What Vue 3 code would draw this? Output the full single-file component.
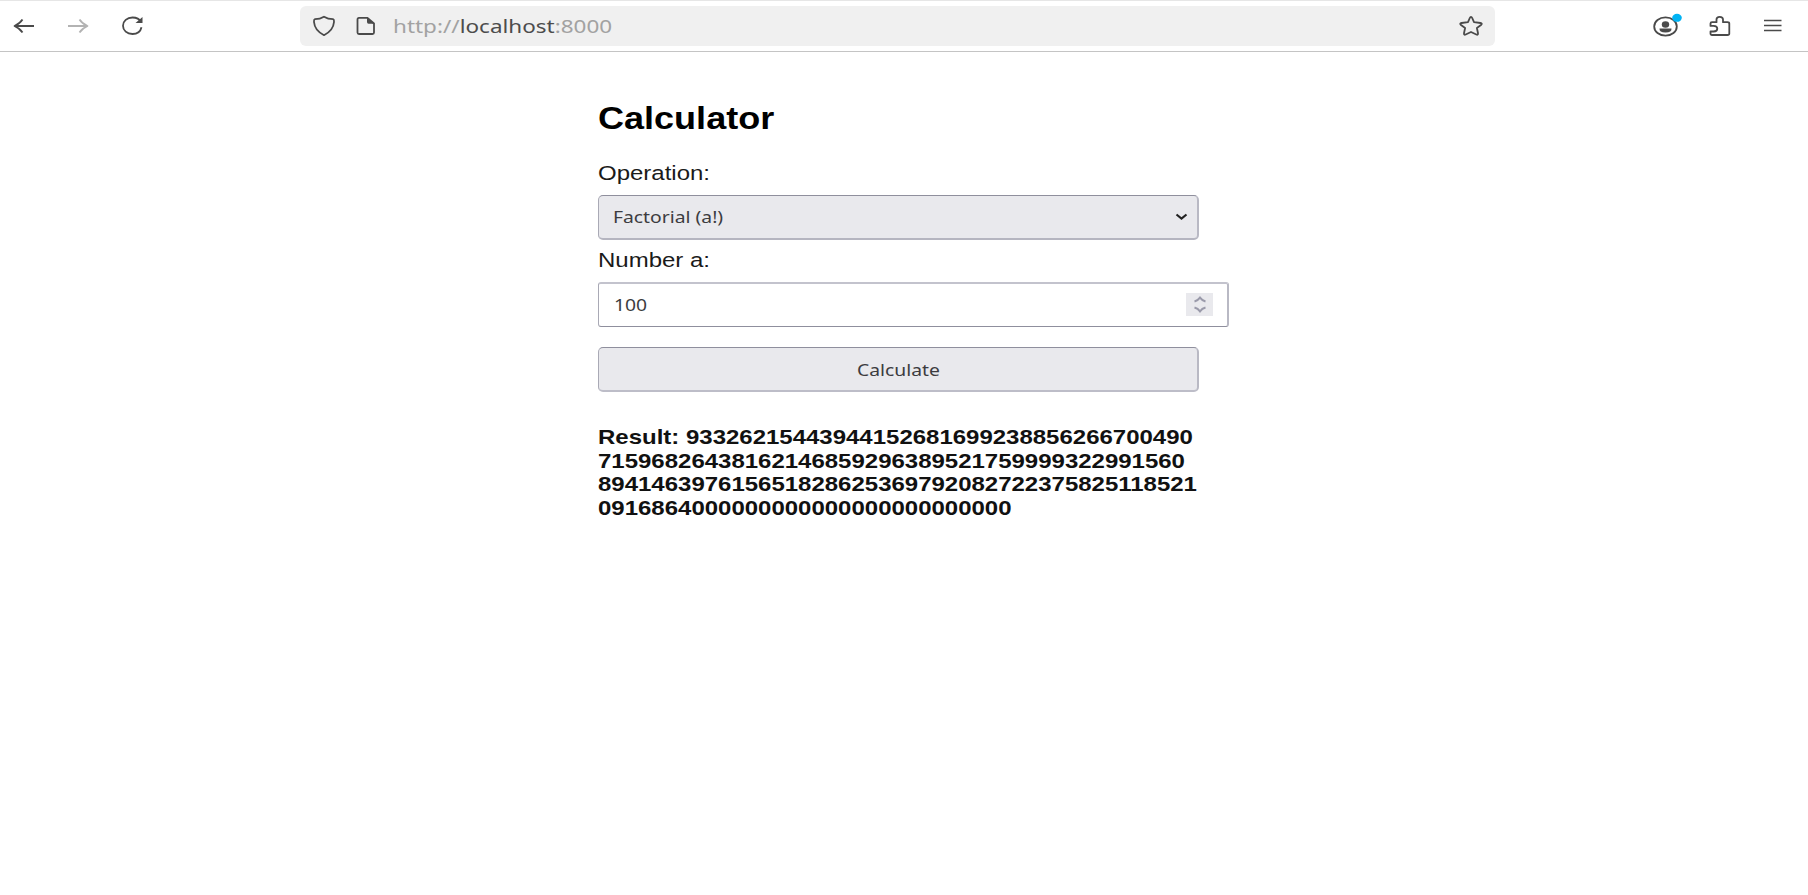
<script setup>
const resultLines = [
  'Result: 93326215443944152681699238856266700490',
  '71596826438162146859296389521759999322991560',
  '894146397615651828625369792082722375825118521',
  '0916864000000000000000000000000',
]
</script>

<template>
  <div class="window">
    <header class="toolbar">
      <nav class="nav">
        <svg width="22" height="16" viewBox="0 0 22 16" class="ic"><path d="M1.5 8H21M9.500 1.500Q7 5.500 1.500 8Q7 10.500 9.500 14.500" /></svg>
        <svg width="22" height="16" viewBox="0 0 22 16" class="ic dim"><path d="M1 8H20.500M12.500 1.500Q15 5.500 20.500 8Q15 10.500 12.500 14.500" /></svg>
        <svg width="24" height="20" viewBox="0 0 24 20" class="ic"><path d="M20.500 11.200C19.500 15.500 16 18 11.500 18C6 18 2 14.500 2 9.700C2 5 6 1.500 11.500 1.500C15.500 1.500 18.500 3 20 6" /><path class="fill" d="M21.500 1V7H14.500Z" /></svg>
      </nav>
      <div class="urlbar">
        <svg width="24" height="22" viewBox="0 0 24 22" class="ic shield"><path d="M12 1.700Q16 4.200 21 4.200Q22.300 4.600 22 7Q21.300 15.500 12 20.200Q2.700 15.500 2 7Q1.700 4.600 3 4.200Q8 4.200 12 1.700Z" /></svg>
        <svg width="20" height="20" viewBox="0 0 20 20" class="ic page"><path d="M11.500 1.900H3Q1.500 1.900 1.500 3.500V16.500Q1.500 18 3 18H16.500Q18 18 18 16.500V7.500Z" /><path class="fill" d="M11 1.500L18.500 7.800H12.500Q11 7.800 11 6Z" /></svg>
        <span class="url"><span class="t">http://<b>localhost</b>:8000</span></span>
        <svg width="26" height="22" viewBox="0 0 26 22" class="ic star"><path d="M13 1.800Q13.700 1.800 14.200 3L16 7.200L22.500 8Q24.600 8.300 23.300 9.700L18.900 13L20 18.300Q20.200 20.300 18.300 19.500L13 17L7.700 19.500Q5.800 20.300 6 18.300L7.100 13L2.700 9.700Q1.400 8.300 3.500 8L10 7.200L11.800 3Q12.300 1.800 13 1.800Z" /></svg>
      </div>
      <div class="actions">
        <svg width="32" height="26" viewBox="0 0 32 26" class="ic"><ellipse cx="13.500" cy="15.500" rx="11.300" ry="9.200" /><ellipse class="fill" cx="13.500" cy="13.500" rx="3.700" ry="3.200" /><path class="fill" d="M7.500 17.600H19.500Q20 21.500 13.500 21.600Q7 21.500 7.500 17.600Z" /><ellipse class="dot" cx="25" cy="6.800" rx="4.800" ry="4" /></svg>
        <svg width="22" height="22" viewBox="0 0 22 22" class="ic puzzle"><path d="M1.500 10.900V8.500Q1.500 7.200 3 7.200H7.500V4.500Q7.500 1.800 10.700 1.800Q14 1.800 14 4.500V7.200H18.500Q20.300 7.200 20.300 8.500V18.500Q20.300 20 18.500 20H3Q1.500 20 1.500 18.500V16.500H4.500Q8.300 16.300 8.300 13.700Q8.300 11.100 4.500 10.900Z" /></svg>
        <svg width="20" height="14" viewBox="0 0 20 14" class="ic menu"><path d="M1 1.500H18.500M1 6.500H18.500M1 11.500H18.500" /></svg>
      </div>
    </header>

    <main class="calc">
      <h2><span class="t">Calculator</span></h2>
      <label class="label"><span class="t">Operation:</span></label>
      <div class="field select">
        <span class="t">Factorial (a!)</span>
        <svg width="13" height="8" viewBox="0 0 13 8"><path d="M1.500 1.500L6.500 5.500L11.500 1.500" fill="none" stroke="#222" stroke-width="2.200" /></svg>
      </div>
      <label class="label second"><span class="t">Number a:</span></label>
      <div class="field input">
        <span class="t">100</span>
        <span class="spin">
          <svg width="14" height="17" viewBox="0 0 14 17"><path d="M1.500 5.500Q5 4.500 7 1.700Q9 4.500 12.500 5.500M1.500 11.500Q5 12.500 7 15.300Q9 12.500 12.500 11.500" fill="none" stroke="#9a9aaa" stroke-width="2" /></svg>
        </span>
      </div>
      <div class="field button"><span class="t">Calculate</span></div>
      <div class="result">
        <div v-for="line in resultLines" :key="line"><span class="t">{{ line }}</span></div>
      </div>
    </main>
  </div>
</template>

<style>
body {
  background: #fff;
}
</style>

<style scoped>
.window {
  width: 1808px;
  height: 895px;
  overflow: hidden;
  background: #fff;
  font-family: "Liberation Sans", Arial, sans-serif;
}
.t {
  display: inline-block;
  white-space: pre;
  transform-origin: 0 50%;
  transform: scaleX(1.17);
}
.toolbar {
  box-sizing: border-box;
  height: 52px;
  display: flex;
  align-items: center;
  border-top: 1px solid #e6e6e6;
  border-bottom: 1px solid #c4c4c4;
}
.ic {
  display: block;
  flex: none;
  fill: none;
  stroke: #4a4a4a;
  stroke-width: 1.8;
  stroke-linejoin: round;
}
.ic .fill {
  fill: #4a4a4a;
  stroke: none;
}
.ic .dot {
  fill: #00b3f4;
  stroke: none;
}
.dim {
  stroke: #b3b3b3;
}
.nav {
  width: 287px;
  padding-left: 13px;
  display: flex;
  align-items: center;
  gap: 32px;
}
.urlbar {
  box-sizing: border-box;
  width: 1195px;
  height: 40px;
  padding: 0 11px 0 12px;
  display: flex;
  align-items: center;
  border-radius: 6px;
  background: #f0f0f0;
}
.page {
  margin-left: 20px;
}
.url {
  flex: 1;
  padding-left: 17px;
  font: 18.500px/30px "Noto Sans", sans-serif;
  color: #a2a2a2;
}
.url .t {
  transform: scaleX(1.215);
}
.url b {
  font-weight: 400;
  color: #4c4c4c;
}
.actions {
  flex: 1;
  display: flex;
  align-items: center;
  padding-left: 157px;
}
.actions .ic:first-child {
  margin-top: -5px;
}
.puzzle {
  margin-left: 25px;
}
.menu {
  margin-left: 32px;
  stroke-width: 1.5;
}
.calc {
  width: 600px;
  margin: 0 auto 0 598px;
  color: #1a1a1a;
}
h2 {
  margin: 0;
  padding-top: 48px;
  font-size: 30.800px;
  line-height: 38px;
  color: #000;
}
.label {
  display: block;
  margin-top: 23px;
  font-size: 20.500px;
  line-height: 24px;
}
.second {
  margin-top: 8px;
}
.field {
  box-sizing: border-box;
  height: 45px;
  display: flex;
  align-items: center;
  justify-content: space-between;
  border: 1px solid #a9a9b5;
  border-top-color: #8f8f9d;
  border-right: 2px solid #b9b9c4;
  border-radius: 5px;
  background: #e9e9ed;
  font-family: "Noto Sans", sans-serif;
  font-size: 16.500px;
  color: #3c3c40;
}
.select {
  width: 601px;
  margin-top: 10px;
  padding: 0 9px 1px 14px;
  border-bottom: 2px solid #b5b5c0;
}
.input {
  width: 631px;
  margin-top: 10px;
  padding: 0 14px 1px 15px;
  border-top: 2px solid #c3c3cd;
  border-bottom-color: #8f8f9d;
  border-radius: 3px;
  background: #fff;
}
.spin {
  width: 27px;
  height: 23px;
  display: flex;
  align-items: center;
  justify-content: center;
  background: #e9e9ed;
}
.button {
  width: 601px;
  margin-top: 20px;
  justify-content: center;
  border-bottom: 2px solid #bdbdc8;
}
.button .t {
  transform-origin: 50% 50%;
}
.result {
  margin-top: 33px;
  font-size: 20.500px;
  font-weight: 700;
  line-height: 23.500px;
  color: #111;
}
</style>
